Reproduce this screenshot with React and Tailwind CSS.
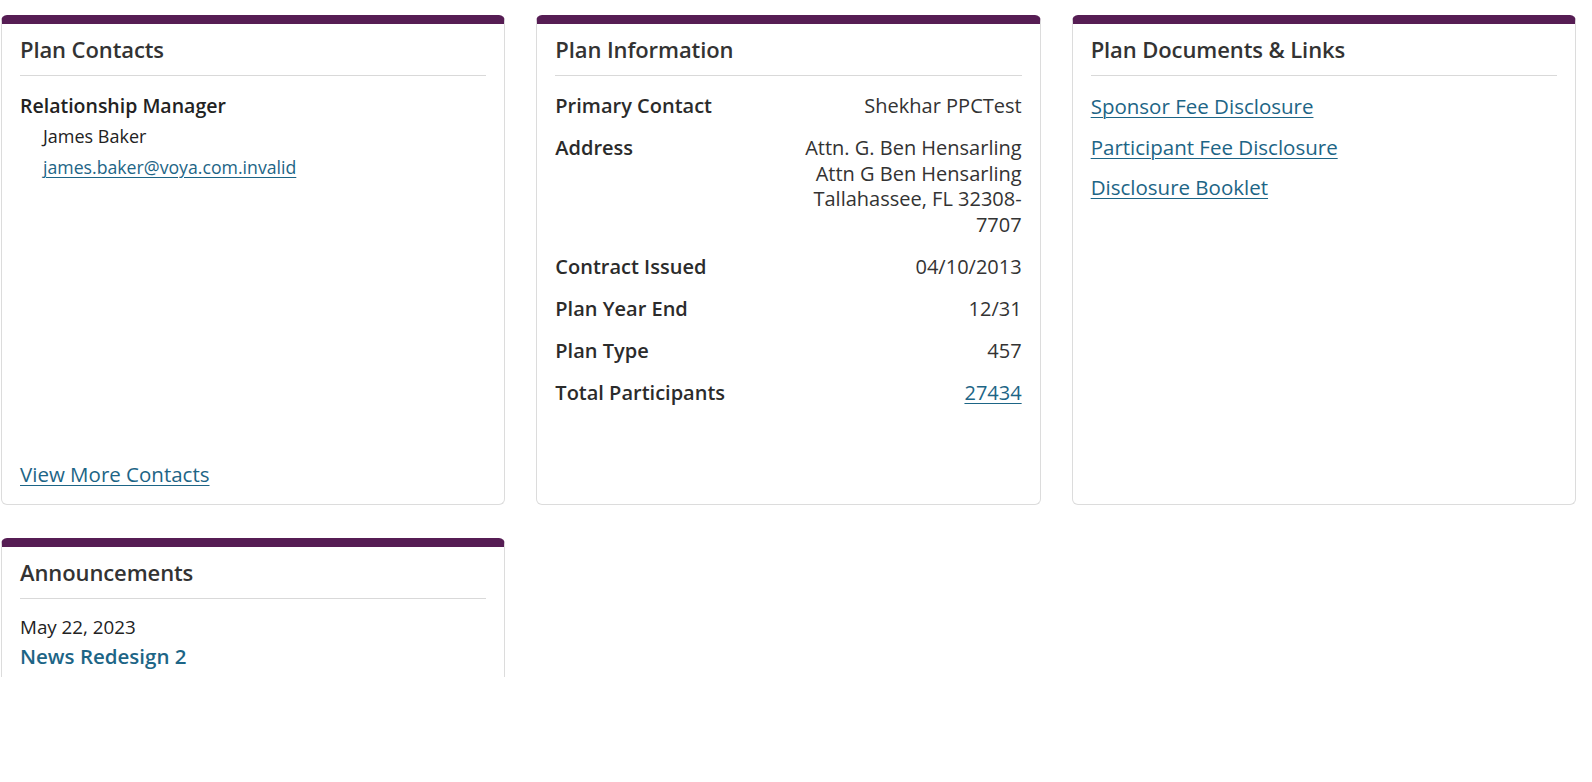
import React from "react";

const linkCls = "text-[#1d6586] underline underline-offset-[3px] decoration-1";

function Card({ title, children, className = "" }) {
  return (
    <div
      className={`flex flex-col bg-white rounded-[6px] border border-[#dcdcdc] border-t-[9px] border-t-[#561d54] px-[18px] ${className}`}
    >
      <h2 className="pt-[12px] pb-[13px] text-[22px] leading-[26px] font-semibold text-[#333] border-b border-[#d9d9d9] tracking-[-0.1px]">
        {title}
      </h2>
      {children}
    </div>
  );
}

function InfoRow({ label, children }) {
  return (
    <div className="flex text-[20px] leading-[25.5px]">
      <div className="w-1/2 font-semibold text-[#2b2b2b]">{label}</div>
      <div className="w-1/2 text-right text-[#333]">{children}</div>
    </div>
  );
}

export default function App() {
  const links = ["Sponsor Fee Disclosure", "Participant Fee Disclosure", "Disclosure Booklet"];

  return (
    <div className="h-[782px] bg-white font-['Open_Sans',sans-serif]">
      <div className="h-[677px] overflow-hidden pt-[15px] pl-px">
        <div className="grid grid-cols-3 gap-x-[31px] gap-y-[33px] w-[1575px]">
          <Card title="Plan Contacts" className="h-[490px] pb-[17px]">
            <div className="pt-[17px] text-[19.5px] leading-[25px] font-semibold text-[#222]">
              Relationship Manager
            </div>
            <div className="pl-[23px] text-[18px] leading-[22px] text-[#222] mt-[7px]">James Baker</div>
            <div className="pl-[23px] text-[17.7px] leading-[22px] mt-[9px]">
              <a href="#" className={linkCls}>james.baker@voya.com.invalid</a>
            </div>
            <div className="mt-auto text-[20.5px] leading-[25px]">
              <a href="#" className={linkCls}>View More Contacts</a>
            </div>
          </Card>

          <Card title="Plan Information" className="h-[490px]">
            <div className="pt-[17px] flex flex-col gap-[16.5px]">
              <InfoRow label="Primary Contact">Shekhar PPCTest</InfoRow>
              <InfoRow label="Address">
                Attn. G. Ben Hensarling
                <br />
                Attn G Ben Hensarling
                <br />
                Tallahassee, FL 32308-7707
              </InfoRow>
              <InfoRow label="Contract Issued">04/10/2013</InfoRow>
              <InfoRow label="Plan Year End">12/31</InfoRow>
              <InfoRow label="Plan Type">457</InfoRow>
              <InfoRow label="Total Participants">
                <a href="#" className={linkCls}>27434</a>
              </InfoRow>
            </div>
          </Card>

          <Card title="Plan Documents & Links" className="h-[490px]">
            <ul className="pt-[18px] flex flex-col gap-[15.5px] text-[20.5px] leading-[25px]">
              {links.map((l) => (
                <li key={l}>
                  <a href="#" className={linkCls}>{l}</a>
                </li>
              ))}
            </ul>
          </Card>

          <Card title="Announcements" className="h-[300px]">
            <div className="pt-[17px] text-[18.8px] leading-[22px] text-[#222]">May 22, 2023</div>
            <a href="#" className="mt-[6px] text-[20.5px] leading-[25px] font-semibold text-[#1d6586]">
              News Redesign 2
            </a>
          </Card>
        </div>
      </div>
    </div>
  );
}
